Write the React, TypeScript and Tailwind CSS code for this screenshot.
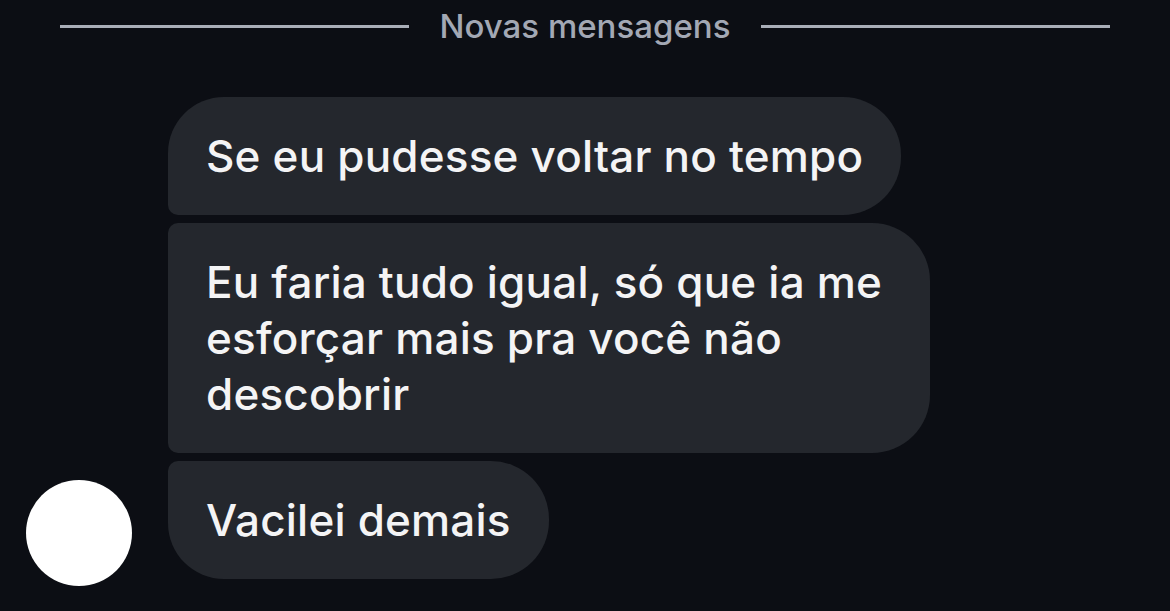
import React from 'react';

const messages = [
  { id: 1, text: 'Se eu pudesse voltar no tempo', shape: 'rounded-tl-[56px] rounded-bl-[10px] rounded-r-[58px]' },
  { id: 2, text: 'Eu faria tudo igual, só que ia me esforçar mais pra você não descobrir', shape: 'rounded-l-[10px] rounded-r-[58px]' },
  { id: 3, text: 'Vacilei demais', shape: 'rounded-tl-[10px] rounded-bl-[56px] rounded-r-[58px]' },
];

export default function App() {
  return (
    <div className="w-[1170px] h-[611px] overflow-hidden bg-[#0c0e14] font-['Inter','Noto_Sans',sans-serif]">
      {/* divider */}
      <div className="flex items-center gap-[31px] px-[60px] h-[52px]">
        <div className="flex-1 h-[3px] bg-[#a9aeb8]" />
        <span className="text-[33px] leading-[40px] font-medium text-[#a3a8b4]">Novas mensagens</span>
        <div className="flex-1 h-[3px] bg-[#a9aeb8]" />
      </div>

      <div className="flex items-end gap-[36px] pl-[26px] mt-[45px]">
        <div className="w-[106px] h-[106px] rounded-full bg-white shrink-0" />
        <div className="flex flex-col items-start gap-[8px] mb-[7px]">
          {messages.map((m) => (
            <div
              key={m.id}
              className={`bg-[#24272d] text-[#f4f4f5] text-[44px] leading-[56px] font-medium tracking-[0.2px] px-[38px] py-[31px] max-w-[762px] ${m.shape}`}
            >
              {m.text}
            </div>
          ))}
        </div>
      </div>
    </div>
  );
}
